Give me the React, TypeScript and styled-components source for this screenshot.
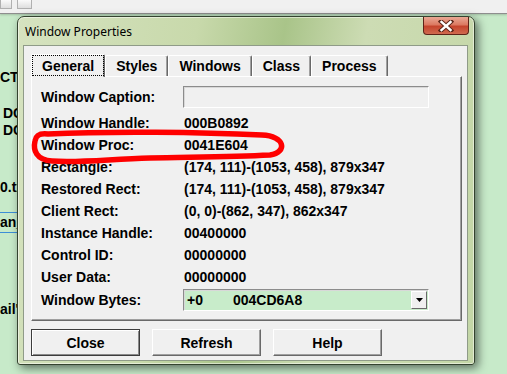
import React from "react";
import styled, { createGlobalStyle } from "styled-components";

const GlobalStyle = createGlobalStyle`
  html, body {
    margin: 0;
    padding: 0;
  }
  body {
    width: 507px;
    height: 374px;
    overflow: hidden;
    font-family: "Liberation Sans", Arial, sans-serif;
  }
`;

const Desktop = styled.div`
  position: relative;
  width: 507px;
  height: 374px;
  overflow: hidden;
  background: #c7eac9;
  display: flex;
  flex-direction: column;
`;

const TopBar = styled.div`
  height: 13px;
  flex-shrink: 0;
  background: #f0f0f0;
  border-bottom: 1px solid #8e8e8e;
  box-shadow: 0 1px 2px rgba(0, 0, 0, 0.18);
  display: flex;
  gap: 5px;
  align-items: flex-start;
`;

const ToolButton = styled.div<{ $w: number }>`
  width: ${(p) => p.$w}px;
  height: 8px;
  border: 1px solid #b0b0b0;
  border-top: none;
  background: linear-gradient(#fafafa, #dedede);
`;

const SideList = styled.div`
  display: flex;
  flex-direction: column;
  width: 40px;
`;

const Snippet = styled.div<{ $gap: number; $shift?: number; $selected?: boolean }>`
  margin-top: ${(p) => p.$gap}px;
  margin-left: ${(p) => p.$shift ?? 0}px;
  height: ${(p) => (p.$selected ? 19 : 17)}px;
  line-height: ${(p) => (p.$selected ? 19 : 17)}px;
  font-size: 14px;
  font-weight: bold;
  color: #000;
  white-space: nowrap;
  border-top: ${(p) => (p.$selected ? "1px solid #3d8ed6" : "none")};
  border-bottom: ${(p) => (p.$selected ? "1px solid #3d8ed6" : "none")};
`;

/* the dialog sits on the desktop like any other window */
const Window = styled.div`
  position: absolute;
  left: 17px;
  top: 16px;
  width: 458px;
  height: 349px;
  box-sizing: border-box;
  display: flex;
  flex-direction: column;
  padding: 0 6px 3px 5px;
  border: 1px solid #34432f;
  border-radius: 7px 7px 3px 3px;
  background: linear-gradient(100deg, #d6e3c0 0%, #c8d9ab 35%, #a9c489 52%, #cddcb4 68%, #c3d6a6 100%);
  box-shadow: 3px 3px 10px rgba(0, 0, 0, 0.55), inset 0 0 0 1px rgba(255, 255, 255, 0.5);
`;

const TitleBar = styled.div`
  height: 28px;
  flex-shrink: 0;
  display: flex;
  align-items: flex-start;
`;

const Title = styled.div`
  margin-left: 2px;
  margin-top: 7px;
  font-family: "Noto Sans", "Open Sans", sans-serif;
  font-size: 12px;
  line-height: 16px;
  color: #000;
`;

const CloseBox = styled.div`
  margin-left: auto;
  margin-right: -1px;
  width: 46px;
  height: 18px;
  box-sizing: border-box;
  border: 1px solid #5e2318;
  border-top: none;
  border-radius: 0 0 4px 4px;
  background: linear-gradient(#e9a894 0%, #dc7a62 45%, #c5452d 55%, #d06a4f 100%);
  display: flex;
  align-items: center;
  justify-content: center;
`;

const Client = styled.div`
  flex: 1;
  box-sizing: border-box;
  border: 1px solid #8f9b88;
  background: #f0f0f0;
  display: flex;
  flex-direction: column;
  padding: 7px 5px 0 7px;
`;

const TabStrip = styled.div`
  height: 23px;
  display: flex;
  align-items: flex-end;
  position: relative;
  z-index: 1;
`;

const Tab = styled.div<{ $active?: boolean }>`
  height: ${(p) => (p.$active ? 23 : 21)}px;
  box-sizing: border-box;
  padding: 0 10px;
  display: flex;
  align-items: center;
  font-size: 14px;
  font-weight: bold;
  color: #000;
  background: #f0f0f0;
  border-top: 1px solid #ffffff;
  border-left: 1px solid #ffffff;
  border-right: 1px solid #696969;
  border-radius: 2px 2px 0 0;
  box-shadow: inset -1px 0 0 #a0a0a0;
  margin-bottom: ${(p) => (p.$active ? -1 : 0)}px;
  outline: ${(p) => (p.$active ? "1px dotted #000" : "none")};
  outline-offset: -2px;
`;

const Panel = styled.div`
  height: 245px;
  box-sizing: border-box;
  border-top: 1px solid #ffffff;
  border-left: 1px solid #ffffff;
  border-right: 1px solid #696969;
  border-bottom: 1px solid #696969;
  box-shadow: inset -1px -1px 0 #a0a0a0;
  padding: 9px 0 0 9px;
  display: flex;
  flex-direction: column;
`;

const Row = styled.div<{ $gap?: number }>`
  height: 22px;
  margin-top: ${(p) => p.$gap ?? 0}px;
  display: grid;
  grid-template-columns: 142px 246px;
  align-items: center;
  font-size: 14px;
  font-weight: bold;
  color: #000;
  white-space: nowrap;
`;

const Label = styled.div`
  line-height: 22px;
`;

const Value = styled.div`
  padding-left: 1px;
  line-height: 22px;
`;

const EditBox = styled.div<{ $fill?: string }>`
  height: 22px;
  box-sizing: border-box;
  border: 1px solid;
  border-color: #8c8c8c #ffffff #ffffff #8c8c8c;
  box-shadow: inset 1px 1px 0 #d8d8d8;
  background: ${(p) => p.$fill ?? "#f0f0f0"};
  display: flex;
  align-items: center;
  padding-left: 3px;
`;

const ComboPart = styled.span<{ $w: number }>`
  width: ${(p) => p.$w}px;
`;

const DropButton = styled.div`
  margin-left: auto;
  width: 16px;
  height: 18px;
  margin-right: 1px;
  box-sizing: border-box;
  background: #f0f0f0;
  border: 1px solid;
  border-color: #ffffff #696969 #696969 #ffffff;
  display: flex;
  align-items: center;
  justify-content: center;
`;

const ButtonRow = styled.div`
  margin-top: 8px;
  display: flex;
  gap: 12px;
`;

const PushButton = styled.div<{ $default?: boolean }>`
  width: 109px;
  height: 27px;
  box-sizing: border-box;
  display: flex;
  align-items: center;
  justify-content: center;
  font-size: 14px;
  font-weight: bold;
  color: #000;
  background: #f0f0f0;
  border: 1px solid;
  border-color: ${(p) => (p.$default ? "#3c3c3c" : "#ffffff #696969 #696969 #ffffff")};
  box-shadow: ${(p) =>
    p.$default
      ? "inset 1px 1px 0 #ffffff, inset -1px -1px 0 #8a8a8a"
      : "inset -1px -1px 0 #a0a0a0"};
`;

const Scribble = styled.svg`
  position: absolute;
  left: 0;
  top: 0;
  pointer-events: none;
`;

const rows: [string, string][] = [
  ["Window Proc:", "0041E604"],
  ["Rectangle:", "(174, 111)-(1053, 458), 879x347"],
  ["Restored Rect:", "(174, 111)-(1053, 458), 879x347"],
  ["Client Rect:", "(0, 0)-(862, 347), 862x347"],
  ["Instance Handle:", "00400000"],
  ["Control ID:", "00000000"],
  ["User Data:", "00000000"],
];

const tabs = ["General", "Styles", "Windows", "Class", "Process"];

export default function App() {
  return (
    <Desktop>
      <GlobalStyle />
      <TopBar>
        <ToolButton $w={10} />
        <ToolButton $w={13} />
      </TopBar>
      <SideList>
        <Snippet $gap={55}>CT</Snippet>
        <Snippet $gap={19} $shift={3}>DC</Snippet>
        <Snippet $gap={0} $shift={3}>DC</Snippet>
        <Snippet $gap={40}>0.txt</Snippet>
        <Snippet $gap={16} $selected>an_</Snippet>
        <Snippet $gap={68}>ail'</Snippet>
      </SideList>

      <Window>
        <TitleBar>
          <Title>Window Properties</Title>
          <CloseBox>
            <svg width="16" height="12" viewBox="0 0 16 12">
              <path d="M3 1.5 L13 10.5 M13 1.5 L3 10.5" stroke="#5a2518" strokeWidth="4.4" strokeLinecap="square" />
              <path d="M3.5 2 L12.5 10 M12.5 2 L3.5 10" stroke="#ffffff" strokeWidth="2.4" strokeLinecap="square" />
            </svg>
          </CloseBox>
        </TitleBar>
        <Client>
          <TabStrip>
            {tabs.map((t, i) => (
              <Tab key={t} $active={i === 0}>
                {t}
              </Tab>
            ))}
          </TabStrip>
          <Panel>
            <Row>
              <Label>Window Caption:</Label>
              <EditBox />
            </Row>
            <Row $gap={4}>
              <Label>Window Handle:</Label>
              <Value>000B0892</Value>
            </Row>
            {rows.map(([k, v]) => (
              <Row key={k}>
                <Label>{k}</Label>
                <Value>{v}</Value>
              </Row>
            ))}
            <Row $gap={1}>
              <Label>Window Bytes:</Label>
              <EditBox $fill="#c8ecca">
                <ComboPart $w={46}>+0</ComboPart>
                <ComboPart $w={90}>004CD6A8</ComboPart>
                <DropButton>
                  <svg width="7" height="4" viewBox="0 0 7 4">
                    <path d="M0 0 H7 L3.5 4 Z" fill="#000" />
                  </svg>
                </DropButton>
              </EditBox>
            </Row>
          </Panel>
          <ButtonRow>
            <PushButton $default>Close</PushButton>
            <PushButton>Refresh</PushButton>
            <PushButton>Help</PushButton>
          </ButtonRow>
        </Client>
      </Window>

      <Scribble width="507" height="374" viewBox="0 0 507 374">
        <path
          d="M48 134 C110 131 200 132 262 135 C285 136 288 152 270 155 C230 157 190 157 150 158 C110 159 80 163 52 161 C36 160 33 150 35 141 C36 135 40 133 48 134"
          fill="none"
          stroke="#ff0000"
          strokeWidth="5.5"
          strokeLinecap="round"
          strokeLinejoin="round"
        />
      </Scribble>
    </Desktop>
  );
}
